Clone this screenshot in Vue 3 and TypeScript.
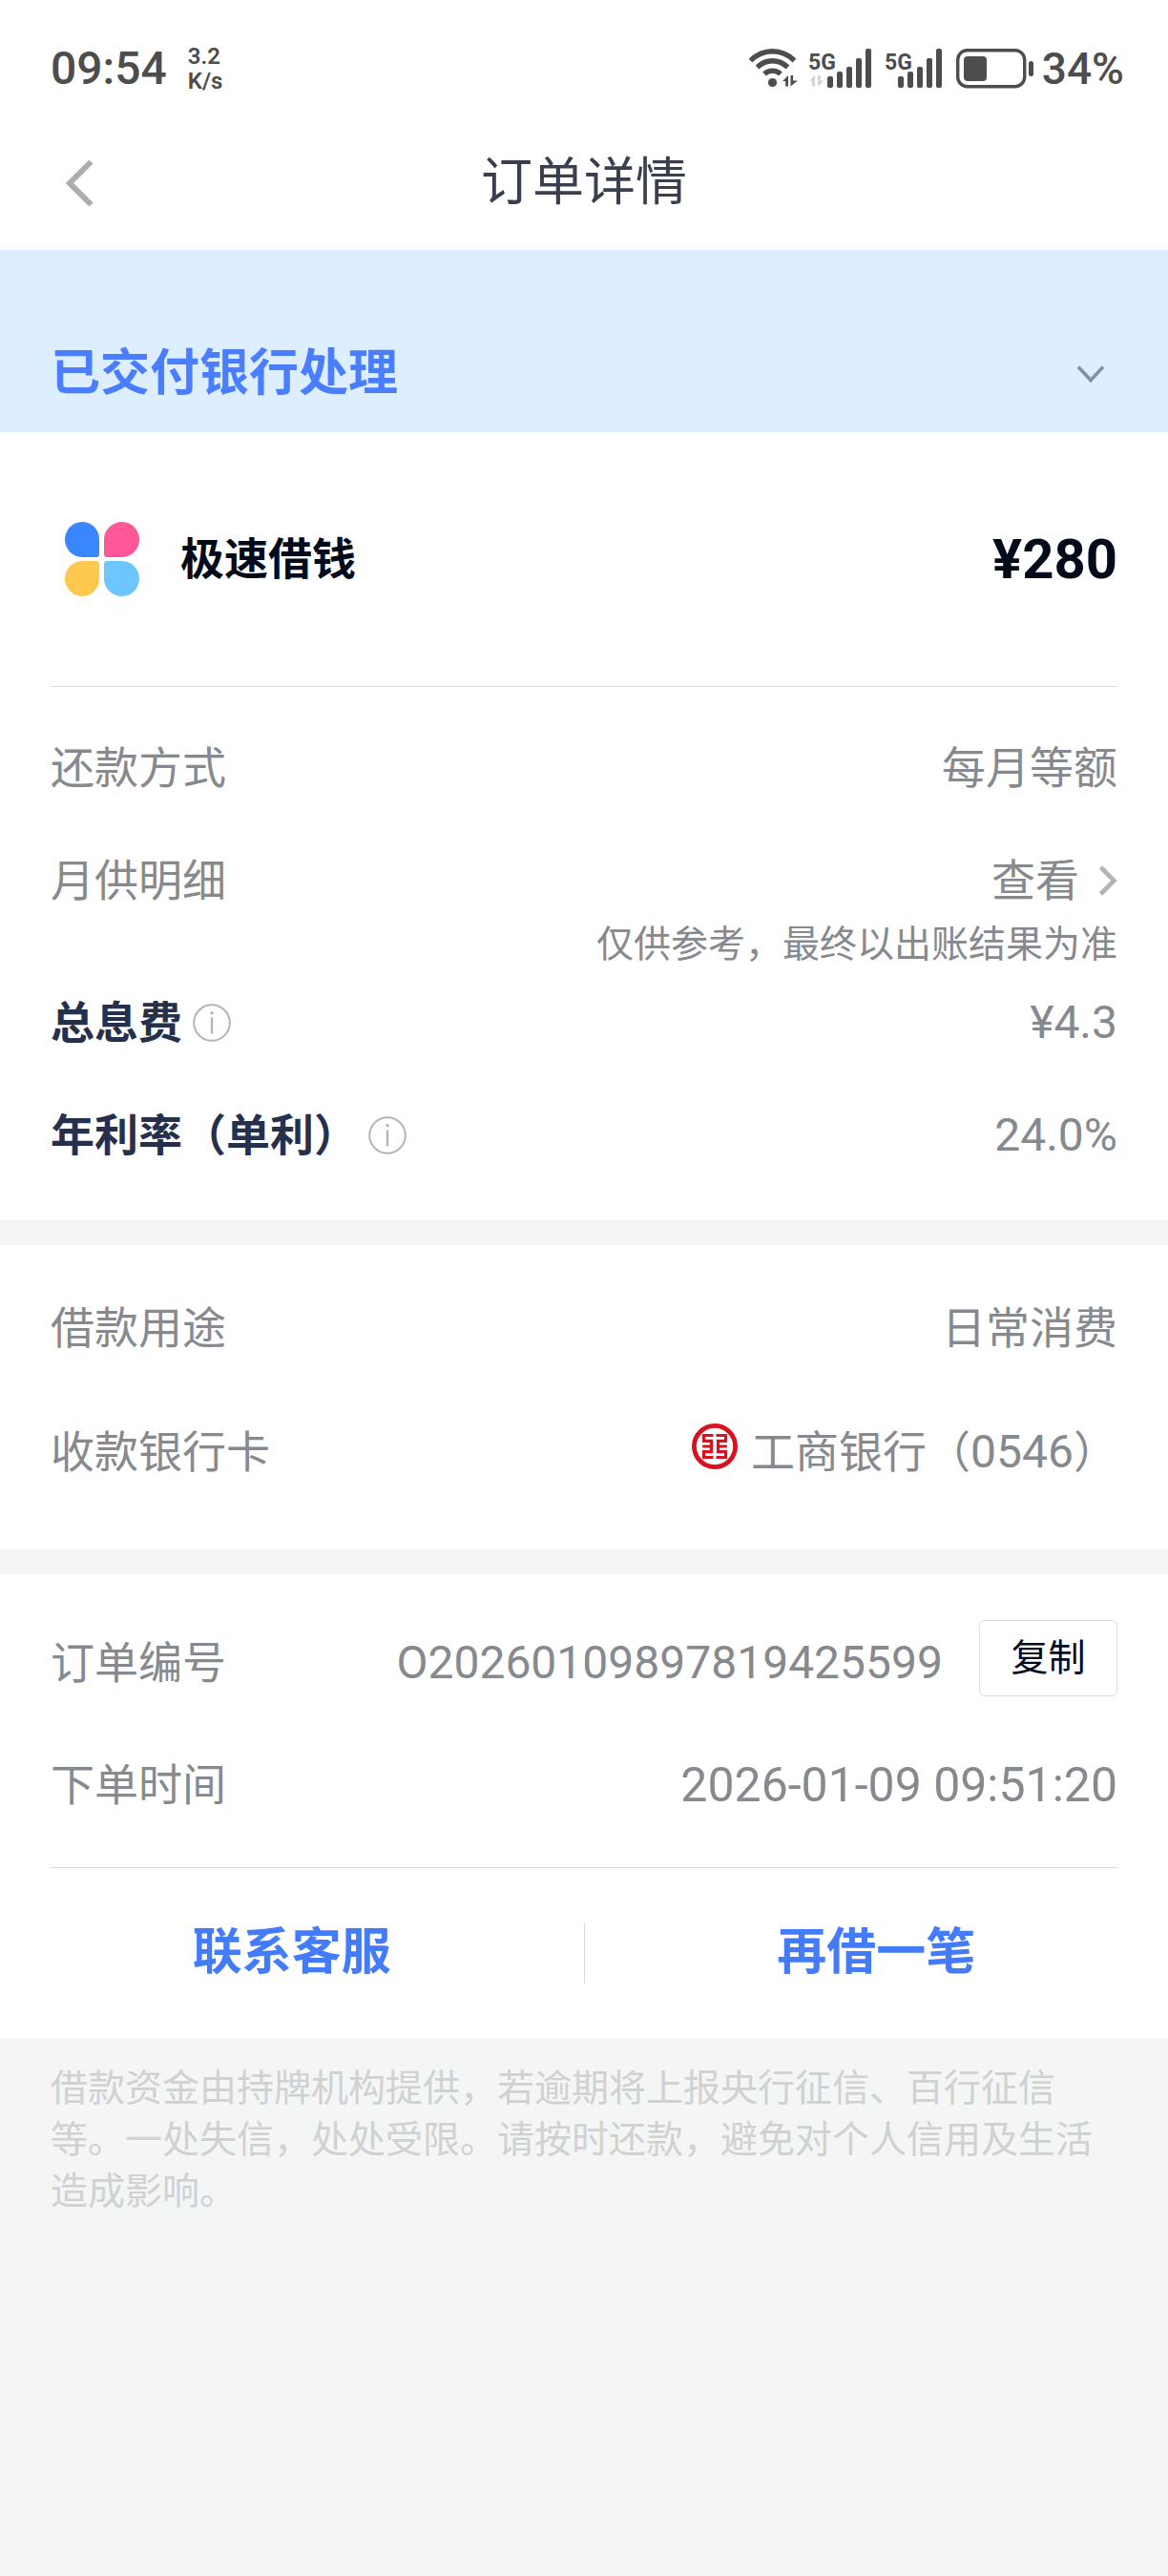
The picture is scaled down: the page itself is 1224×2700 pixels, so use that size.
<script setup lang="ts">
const time = '09:54'
const speed = { value: '3.2', unit: 'K/s' }
const battery = '34%'

const notice =
  '借款资金由持牌机构提供，若逾期将上报央行征信、百行征信等。一处失信，处处受限。请按时还款，避免对个人信用及生活造成影响。'
</script>

<template>
  <div class="page">
    <div class="status">
      <div class="status-left">
        <span class="clock">{{ time }}</span>
        <span class="speed">
          <span>{{ speed.value }}</span>
          <span>{{ speed.unit }}</span>
        </span>
      </div>
      <div class="status-right">
        <svg class="wifi" width="51" height="42" viewBox="0 0 51 42" aria-hidden="true">
          <g fill="none" stroke="#4d4d4d" stroke-width="5.400">
            <path d="M1.500 12.500C15 -.5 34 -.5 47.500 12.500" />
            <path d="M8.500 19.500C18 10.500 31 10.500 40.500 19.500" />
            <path d="M16 26.500C21 22 28 22 33 26.500" />
          </g>
          <circle cx="24.500" cy="35.500" r="4.600" fill="#4d4d4d" />
          <path d="M41 28v11.500h-2.800v-5.500H35zM43.500 39.500V28h2.600v5.500H51z" fill="#4d4d4d" />
        </svg>
        <svg class="signal" width="67" height="42" viewBox="0 0 67 42" aria-hidden="true">
          <text x="0" y="22" class="net">5G</text>
          <path d="M7 28v11.500H4.200v-5.500H1zM10 39.500V28h2.800v5.500h3.700z" fill="#d2d2d2" />
          <g fill="#4d4d4d">
            <rect x="20" y="29" width="6" height="12" rx="2" />
            <rect x="30" y="24" width="6" height="17" rx="2" />
            <rect x="40" y="19" width="6" height="22" rx="2" />
            <rect x="50" y="10" width="6" height="31" rx="2" />
            <rect x="60" y="0" width="6" height="41" rx="2" />
          </g>
        </svg>
        <svg class="signal" width="62" height="42" viewBox="0 0 62 42" aria-hidden="true">
          <text x="0" y="22" class="net">5G</text>
          <g fill="#4d4d4d">
            <rect x="14" y="29" width="6" height="12" rx="2" />
            <rect x="24" y="24" width="6" height="17" rx="2" />
            <rect x="34" y="19" width="6" height="22" rx="2" />
            <rect x="44" y="10" width="6" height="31" rx="2" />
            <rect x="54" y="0" width="6" height="41" rx="2" />
          </g>
        </svg>
        <svg class="battery" width="82" height="42" viewBox="0 0 82 42" aria-hidden="true">
          <rect x="1.700" y="1.700" width="70" height="38" rx="10" fill="none" stroke="#4d4d4d" stroke-width="3.400" />
          <rect x="8" y="8" width="24" height="26" rx="4" fill="#4d4d4d" />
          <rect x="76" y="13" width="5" height="16" rx="2.500" fill="#4d4d4d" />
        </svg>
        <span class="level">{{ battery }}</span>
      </div>
    </div>

    <header class="nav">
      <button class="back" type="button" aria-label="返回">
        <svg width="30" height="50" viewBox="0 0 30 50" aria-hidden="true">
          <path d="M26.500 2.500L4 25l22.500 22.500" fill="none" stroke="#adadad" stroke-width="6" />
        </svg>
      </button>
      <h1>订单详情</h1>
    </header>

    <button class="banner" type="button" aria-expanded="false">
      <span>已交付银行处理</span>
      <svg width="30" height="20" viewBox="0 0 30 20" aria-hidden="true">
        <path d="M2 2.500L15 16.500L28 2.500" fill="none" stroke="#8392a3" stroke-width="3.600" />
      </svg>
    </button>

    <section class="card loan">
      <div class="product">
        <svg width="80" height="80" viewBox="0 0 80 80" aria-hidden="true">
          <path d="M19 1C29 1 37 9 37 19v16q0 3-3 3H19C9 38 1 29.500 1 19.500S9 1 19 1z" fill="#3a86ff" />
          <path d="M61 1C51 1 42 9 42 19v16q0 3 3 3h16C71 38 79 29.500 79 19.500S71 1 61 1z" fill="#ff5797" />
          <path d="M19 79C29 79 37 71 37 61V45q0-3-3-3H19C9 42 1 50.500 1 60.500S9 79 19 79z" fill="#ffc94f" />
          <path d="M61 79C51 79 42 71 42 61V45q0-3 3-3h16C71 42 79 50.500 79 60.500S71 79 61 79z" fill="#6dc6ff" />
        </svg>
        <h2>极速借钱</h2>
        <strong class="amount">¥280</strong>
      </div>
      <dl class="rows">
        <div class="row">
          <dt>还款方式</dt>
          <dd>每月等额</dd>
        </div>
        <div class="row">
          <dt>月供明细</dt>
          <dd>
            <a class="view" href="#plan">
              查看
              <svg width="20" height="32" viewBox="0 0 20 32" aria-hidden="true">
                <path d="M2.500 2L16.500 16L2.500 30" fill="none" stroke="#b4b4b4" stroke-width="4.600" />
              </svg>
            </a>
          </dd>
        </div>
        <div class="note"><dd>仅供参考，最终以出账结果为准</dd></div>
        <div class="row">
          <dt class="strong">
            总息费
            <button class="info" type="button" aria-label="总息费说明">
              <svg width="40" height="40" viewBox="0 0 40 40" aria-hidden="true">
                <circle cx="20" cy="20" r="18.800" fill="none" stroke="#b4b4b4" stroke-width="2" />
                <circle cx="20" cy="9.800" r="1.700" fill="#b4b4b4" />
                <path d="M20 14.500v17" stroke="#b4b4b4" stroke-width="2.400" />
              </svg>
            </button>
          </dt>
          <dd class="num">¥4.3</dd>
        </div>
        <div class="row">
          <dt class="strong">
            年利率（单利）
            <button class="info" type="button" aria-label="年利率说明">
              <svg width="40" height="40" viewBox="0 0 40 40" aria-hidden="true">
                <circle cx="20" cy="20" r="18.800" fill="none" stroke="#b4b4b4" stroke-width="2" />
                <circle cx="20" cy="9.800" r="1.700" fill="#b4b4b4" />
                <path d="M20 14.500v17" stroke="#b4b4b4" stroke-width="2.400" />
              </svg>
            </button>
          </dt>
          <dd class="num">24.0%</dd>
        </div>
      </dl>
    </section>

    <section class="card usage">
      <dl class="rows">
        <div class="row">
          <dt>借款用途</dt>
          <dd>日常消费</dd>
        </div>
        <div class="row">
          <dt>收款银行卡</dt>
          <dd class="bank">
            <svg width="48" height="48" viewBox="0 0 48 48" aria-hidden="true">
              <circle cx="24" cy="24" r="21.600" fill="none" stroke="#d8121f" stroke-width="4.800" />
              <g fill="none" stroke="#d8121f" stroke-width="3.200">
                <path d="M22.500 12.500H12.500V18.300H20.500V29.700H12.500V35.500H22.500M11.200 24H20.500" />
                <path d="M25.500 12.500H35.500V18.300H27.500V29.700H35.500V35.500H25.500M36.800 24H27.500" />
              </g>
            </svg>
            <span>工商银行（<span class="num">0546</span>）</span>
          </dd>
        </div>
      </dl>
    </section>

    <section class="card order">
      <dl class="rows">
        <div class="row tall">
          <dt>订单编号</dt>
          <dd class="copyable">
            <span class="num">O20260109897819425599</span>
            <button class="copy" type="button">复制</button>
          </dd>
        </div>
        <div class="row">
          <dt>下单时间</dt>
          <dd class="date">2026-01-09 09:51:20</dd>
        </div>
      </dl>
      <hr />
      <div class="actions">
        <button type="button">联系客服</button>
        <button type="button">再借一笔</button>
      </div>
    </section>

    <p class="notice">{{ notice }}</p>
  </div>
</template>

<style>
body {
  margin: 0;
  background: #f4f6f6;
}
</style>

<style scoped>
.page {
  font-family: Roboto, 'Noto Sans CJK SC', sans-serif;
  font-size: 46px;
  line-height: 60px;
  color: #86898e;
}

h1,
h2,
dl,
dd,
p {
  margin: 0;
}

button {
  padding: 0;
  border: 0;
  background: none;
  font: inherit;
  color: inherit;
  cursor: pointer;
}

svg {
  display: block;
  flex: none;
}

.status {
  display: flex;
  justify-content: space-between;
  align-items: center;
  padding: 42px 46px 40px 53px;
  background: #fff;
  color: #4d4d4d;
}

.status-left,
.status-right {
  display: flex;
  align-items: center;
}

.clock {
  font-size: 48px;
  font-weight: 500;
}

.level {
  font-weight: 500;
}

.speed {
  display: flex;
  flex-direction: column;
  margin-left: 22px;
  font-size: 24px;
  font-weight: 600;
  line-height: 26px;
}

.net {
  font-size: 23px;
  font-weight: 700;
  fill: #4d4d4d;
}

.wifi {
  margin-right: 11px;
}

.signal {
  margin-right: 13px;
}

.battery {
  margin-right: 8px;
}

.nav {
  display: grid;
  grid-template-columns: 1fr auto 1fr;
  align-items: center;
  padding: 0 53px 20px;
  background: #fff;
}

.back {
  display: flex;
  align-items: center;
  height: 100px;
  padding: 0 16px;
}

h1 {
  font-size: 54px;
  font-weight: 400;
  color: #3a3f50;
}

.banner {
  display: flex;
  justify-content: space-between;
  align-items: center;
  width: 100%;
  padding: 100px 66px 31px 53px;
  background: #dceeff;
  font-size: 52px;
  font-weight: 700;
  color: #4a7dff;
}

.card {
  background: #fff;
}

.card + .card {
  margin-top: 26px;
}

.product {
  display: flex;
  align-items: center;
  height: 266px;
  margin: 0 53px;
  padding-left: 14px;
  border-bottom: 1px solid #d9dadb;
}

h2 {
  margin-left: 42px;
  font-size: 46px;
  font-weight: 700;
  color: #030b1a;
}

.amount {
  margin-left: auto;
  font-size: 58px;
  color: #030b1a;
}

.rows {
  padding: 0 53px;
}

.loan .rows {
  padding-top: 55px;
  padding-bottom: 59px;
}

.usage .rows {
  padding-top: 57px;
  padding-bottom: 72px;
}

.order .rows {
  padding-top: 48px;
  padding-bottom: 56px;
}

.row {
  display: flex;
  justify-content: space-between;
  align-items: center;
  min-height: 60px;
}

.row + .row {
  margin-top: 58px;
}

.usage .row + .row {
  margin-top: 70px;
}

.tall {
  min-height: 90px;
}

.order .row + .row {
  margin-top: 53px;
}

.strong {
  display: flex;
  align-items: center;
  font-weight: 700;
  color: #25304d;
}

.info {
  margin-left: 11px;
}

.num {
  font-size: 48px;
}

.date {
  font-size: 50px;
}

.view {
  display: flex;
  align-items: center;
  gap: 20px;
  color: inherit;
  text-decoration: none;
}

.note {
  margin: 10px 0 25px;
  font-size: 39px;
  line-height: 54px;
  text-align: right;
}

.bank {
  display: flex;
  align-items: flex-start;
  gap: 14px;
}

.copyable {
  display: flex;
  align-items: center;
  height: 90px;
  gap: 38px;
}

.copy {
  align-self: flex-start;
  width: 145px;
  height: 80px;
  border: 1px solid #dcdddd;
  border-radius: 6px;
  font-size: 39px;
  color: #030b1a;
}

hr {
  height: 1px;
  margin: 0 53px;
  border: 0;
  background: #d9dadb;
}

.actions {
  display: flex;
  align-items: center;
  height: 178px;
}

.actions button {
  flex: 1;
  font-size: 52px;
  font-weight: 700;
  line-height: 64px;
  color: #447bfa;
}

.actions button + button {
  border-left: 1px solid #d9dadb;
}

.notice {
  padding: 26px 53px;
  font-size: 39px;
  line-height: 54px;
  color: #d0d1d1;
}
</style>
